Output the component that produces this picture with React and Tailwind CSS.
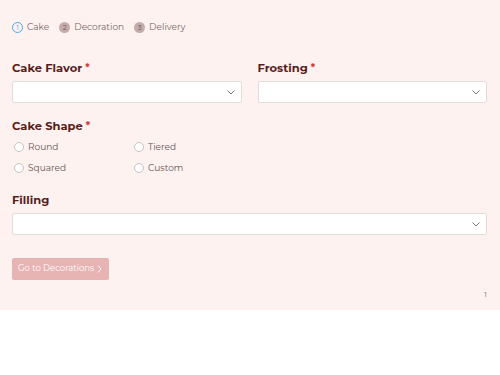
import React from "react";

const ff = { fontFamily: "Montserrat, 'Open Sans', 'Liberation Sans', sans-serif" };

function Chevron() {
    return (
        <svg width="10" height="10" viewBox="0 0 10 10" className="text-[#777]">
            <path d="M1.5 3.5 L5 7 L8.5 3.5" fill="none" stroke="currentColor" strokeWidth="1" />
        </svg>
    );
}

function Select() {
    return (
        <div className="h-[22px] w-full bg-white border border-[#e2dcdc] rounded-[2px] flex items-center justify-end pr-[5px]">
            <Chevron />
        </div>
    );
}

function Label({ children, required }) {
    return (
        <div className="text-[11.5px] font-bold text-[#5a1c1c] leading-none mb-[6px]">
            {children}
            {required && <span className="text-[#d23a3a] ml-[3px] text-[10px] align-top">*</span>}
        </div>
    );
}

function Radio({ label }) {
    return (
        <div className="flex items-center gap-[4px] h-[21px]">
            <span className="w-[10px] h-[10px] rounded-full border border-[#c9c4c4] bg-white" />
            <span className="text-[9px] text-[#6a5353]">{label}</span>
        </div>
    );
}

export default function App() {
    const steps = [
        { n: 1, name: "Cake", active: true },
        { n: 2, name: "Decoration" },
        { n: 3, name: "Delivery" },
    ];

    return (
        <div style={ff} className="w-[500px] bg-white">
            <div className="bg-[#fdf2f0] h-[310px] pl-[12px] pr-[13px] pt-[21px] relative">
                {/* Steps */}
                <div className="flex items-center gap-[10px] h-[12px]">
                    {steps.map((s) => (
                        <div key={s.n} className="flex items-center gap-[4px]">
                            {s.active ? (
                                <span className="w-[11px] h-[11px] rounded-full border border-[#4aa8ee] text-[#4aa8ee] text-[7px] flex items-center justify-center leading-none">
                                    {s.n}
                                </span>
                            ) : (
                                <span className="w-[11px] h-[11px] rounded-full bg-[#c4acac] text-[#6d5555] text-[7px] flex items-center justify-center leading-none">
                                    {s.n}
                                </span>
                            )}
                            <span className="text-[9px] text-[#7a6666]">{s.name}</span>
                        </div>
                    ))}
                </div>

                {/* Flavor / Frosting */}
                <div className="grid grid-cols-2 gap-[16px] mt-[30px]">
                    <div>
                        <Label required>Cake Flavor</Label>
                        <Select />
                    </div>
                    <div>
                        <Label required>Frosting</Label>
                        <Select />
                    </div>
                </div>

                {/* Shape */}
                <div className="mt-[18px]">
                    <div className="mb-[-2px]">
                        <Label required>Cake Shape</Label>
                    </div>
                    <div className="grid grid-cols-[120px_120px] pl-[2px]">
                        <Radio label="Round" />
                        <Radio label="Tiered" />
                        <Radio label="Squared" />
                        <Radio label="Custom" />
                    </div>
                </div>

                {/* Filling */}
                <div className="mt-[17px]">
                    <Label>Filling</Label>
                    <Select />
                </div>

                <button className="mt-[23px] h-[22px] px-[6px] bg-[#e8b3b3] rounded-[2px] text-white text-[8.5px] flex items-center gap-[2px]">
                    Go to Decorations
                    <svg width="7" height="10" viewBox="0 0 7 10">
                        <path d="M2 1.5 L5 5 L2 8.5" fill="none" stroke="white" strokeWidth="1" />
                    </svg>
                </button>

                <div className="absolute right-[13px] top-[288px] text-[8px] text-[#8a6a7a]">1</div>
            </div>
        </div>
    );
}
